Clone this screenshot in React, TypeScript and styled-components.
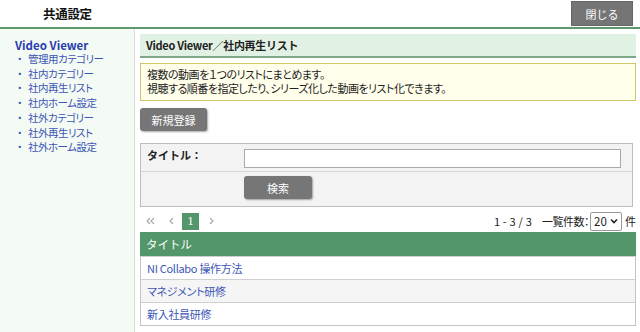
import React from "react";
import styled, { createGlobalStyle } from "styled-components";

const GlobalStyle = createGlobalStyle`
  html, body {
    margin: 0;
    padding: 0;
    background: #fff;
    font-family: "Noto Sans CJK JP", "Noto Sans", sans-serif;
    font-size: 11px;
    color: #222;
  }
`;

const Page = styled.div`
  display: flex;
  flex-direction: column;
  height: 332px;
  overflow: hidden;
`;

const Header = styled.div`
  height: 27px;
  display: flex;
  align-items: center;
  justify-content: space-between;
  border-bottom: 2px solid #5c9a6b;
  padding-left: 43px;
  padding-right: 7px;
  flex-shrink: 0;
`;

const HeaderTitle = styled.div`
  font-size: 12.5px;
  font-weight: bold;
  color: #111;
  letter-spacing: -0.3px;
`;

const CloseButton = styled.button`
  width: 62px;
  height: 25px;
  margin-top: 1px;
  background: #757575;
  border: 1px solid #666;
  color: #fff;
  font-family: inherit;
  font-size: 11px;
  padding: 0;
  align-self: flex-start;
`;

const Body = styled.div`
  display: flex;
  flex: 1;
  min-height: 0;
`;

const Sidebar = styled.div`
  width: 135px;
  flex-shrink: 0;
  background: #f4faf4;
  border-right: 1px solid #d8ddd8;
  padding: 9px 0 0 15px;
  box-sizing: border-box;
`;

const SideTitle = styled.div`
  font-size: 11.5px;
  font-weight: bold;
  color: #2a3cb0;
  height: 14px;
  line-height: 14px;
`;

const SideList = styled.ul`
  list-style: none;
  margin: 0;
  padding: 0 0 0 2px;
`;

const SideItem = styled.li`
  display: flex;
  align-items: center;
  height: 14.7px;
  font-size: 10.5px;
  line-height: 1;
  color: #3c56b8;
  font-feature-settings: "palt";
  letter-spacing: -0.5px;

  &::before {
    content: "・";
    width: 11px;
    color: #3c56b8;
  }
`;

const Main = styled.div`
  flex: 1;
  padding: 5px 4px 0 5px;
  display: flex;
  flex-direction: column;
  min-width: 0;
`;

const TitleBar = styled.div`
  height: 22px;
  background: #e1f1e3;
  border-bottom: 2px solid #7fa889;
  display: flex;
  align-items: center;
  padding-left: 6px;
  font-weight: bold;
  font-size: 11px;
  letter-spacing: -0.3px;
`;

const InfoBox = styled.div`
  margin-top: 5px;
  border: 1px solid #cfc86a;
  background: #ffffeb;
  padding: 4px 6px 5px;
  font-feature-settings: "palt";
  letter-spacing: -0.5px;
`;

const InfoLine = styled.div`
  height: 13.5px;
  line-height: 1;
  display: flex;
  align-items: center;
`;

const GrayButton = styled.button<{ $w: number }>`
  width: ${(p) => p.$w}px;
  height: 23px;
  background: #767676;
  border: none;
  border-radius: 3px;
  box-shadow: 1px 1px 2px rgba(0, 0, 0, 0.35);
  color: #fff;
  font-family: inherit;
  font-size: 11px;
  padding: 0;
`;

const NewButtonRow = styled.div`
  margin-top: 7px;
`;

const SearchBox = styled.div`
  margin-top: 12px;
  margin-right: 3px;
  border: 1px solid #bdbdbd;
  background: #f3f3f3;
`;

const SearchRow = styled.div<{ $last?: boolean }>`
  display: flex;
  align-items: flex-start;
  height: ${(p) => (p.$last ? 34 : 28)}px;
  padding-top: 4px;
  box-sizing: border-box;
  border-bottom: ${(p) => (p.$last ? "none" : "1px solid #d6d6d6")};
`;

const Label = styled.div`
  width: 103px;
  padding-left: 6px;
  box-sizing: border-box;
  font-weight: bold;
  line-height: 14px;
  flex-shrink: 0;
`;

const TextInput = styled.input`
  width: 377px;
  height: 19px;
  box-sizing: border-box;
  border: 1px solid #aaa;
  background: #fff;
  padding: 0 3px;
  margin-top: 1px;
`;

const Pager = styled.div`
  display: flex;
  align-items: center;
  justify-content: space-between;
  margin-top: 4px;
  height: 20px;
`;

const PagerLeft = styled.div`
  display: flex;
  align-items: center;
  padding-left: 6px;
`;

const PageArrow = styled.span<{ $w: number }>`
  display: flex;
  align-items: center;
  width: ${(p) => p.$w}px;
  height: 17px;
`;

const PageNum = styled.span`
  width: 17px;
  height: 17px;
  background: #52966a;
  color: #fff;
  display: flex;
  align-items: center;
  justify-content: center;
  font-family: "Liberation Serif", serif;
  font-size: 13px;
  margin-right: 10px;
`;

const PagerRight = styled.div`
  display: flex;
  align-items: center;
`;

const Count = styled.span`
  margin-right: 10px;
  letter-spacing: 0.2px;
`;

const PerPage = styled.span`
  font-feature-settings: "palt";
  letter-spacing: -0.5px;
`;

const Select = styled.div`
  width: 32px;
  height: 19px;
  box-sizing: border-box;
  border: 1px solid #999;
  border-radius: 2px;
  background: #fff;
  display: flex;
  align-items: center;
  justify-content: space-between;
  padding: 0 3px 0 3px;
  margin: 0 3px 0 1px;
  font-size: 11.5px;
`;

const Table = styled.div`
  margin-top: 1px;
  border: 1px solid #c4c4c4;
  border-top: none;
`;

const TableHead = styled.div`
  height: 24px;
  background: #52966a;
  color: #fff;
  display: flex;
  align-items: center;
  padding-left: 6px;
  font-size: 11.5px;
  margin: 0 -1px;
`;

const TableRow = styled.div<{ $alt?: boolean }>`
  height: 23px;
  box-sizing: border-box;
  display: flex;
  align-items: center;
  padding-left: 6px;
  background: ${(p) => (p.$alt ? "#f5f5f5" : "#fff")};
  border-top: 1px solid #cfcfcf;
  color: #3c56b8;
  font-feature-settings: "palt";
  letter-spacing: -0.3px;
`;

const sideItems = [
  "管理用カテゴリー",
  "社内カテゴリー",
  "社内再生リスト",
  "社内ホーム設定",
  "社外カテゴリー",
  "社外再生リスト",
  "社外ホーム設定",
];

const rows = ["NI Collabo 操作方法", "マネジメント研修", "新入社員研修"];

const Chevron = ({ dir, double }: { dir: "l" | "r"; double?: boolean }) => {
  const one = dir === "l" ? "M4 1 L1 4 L4 7" : "M1 1 L4 4 L1 7";
  return (
    <svg width={double ? 9 : 5} height="8" viewBox={double ? "0 0 9 8" : "0 0 5 8"}>
      <path d={one} fill="none" stroke="#a8a8a8" strokeWidth="1.1" />
      {double && (
        <path
          d={dir === "l" ? "M8 1 L5 4 L8 7" : "M5 1 L8 4 L5 7"}
          fill="none"
          stroke="#a8a8a8"
          strokeWidth="1.1"
        />
      )}
    </svg>
  );
};

export default function App() {
  return (
    <Page>
      <GlobalStyle />
      <Header>
        <HeaderTitle>共通設定</HeaderTitle>
        <CloseButton>閉じる</CloseButton>
      </Header>
      <Body>
        <Sidebar>
          <SideTitle>Video Viewer</SideTitle>
          <SideList>
            {sideItems.map((s) => (
              <SideItem key={s}>{s}</SideItem>
            ))}
          </SideList>
        </Sidebar>
        <Main>
          <TitleBar>Video Viewer／社内再生リスト</TitleBar>
          <InfoBox>
            <InfoLine>複数の動画を１つのリストにまとめます。</InfoLine>
            <InfoLine>視聴する順番を指定したり、シリーズ化した動画をリスト化できます。</InfoLine>
          </InfoBox>
          <NewButtonRow>
            <GrayButton $w={67}>新規登録</GrayButton>
          </NewButtonRow>
          <SearchBox>
            <SearchRow>
              <Label>タイトル：</Label>
              <TextInput />
            </SearchRow>
            <SearchRow $last>
              <Label />
              <GrayButton $w={68}>検索</GrayButton>
            </SearchRow>
          </SearchBox>
          <Pager>
            <PagerLeft>
              <PageArrow $w={23}>
                <Chevron dir="l" double />
              </PageArrow>
              <PageArrow $w={13}>
                <Chevron dir="l" />
              </PageArrow>
              <PageNum>1</PageNum>
              <PageArrow $w={10}>
                <Chevron dir="r" />
              </PageArrow>
            </PagerLeft>
            <PagerRight>
              <Count>1 - 3 / 3</Count>
              <PerPage>一覧件数：</PerPage>
              <Select>
                <span>20</span>
                <svg width="8" height="6" viewBox="0 0 8 6">
                  <path d="M1 1.5 L4 4.5 L7 1.5" fill="none" stroke="#222" strokeWidth="1.6" />
                </svg>
              </Select>
              <span>件</span>
            </PagerRight>
          </Pager>
          <Table>
            <TableHead>タイトル</TableHead>
            {rows.map((r, i) => (
              <TableRow key={r} $alt={i === 1}>
                {r}
              </TableRow>
            ))}
          </Table>
        </Main>
      </Body>
    </Page>
  );
}
